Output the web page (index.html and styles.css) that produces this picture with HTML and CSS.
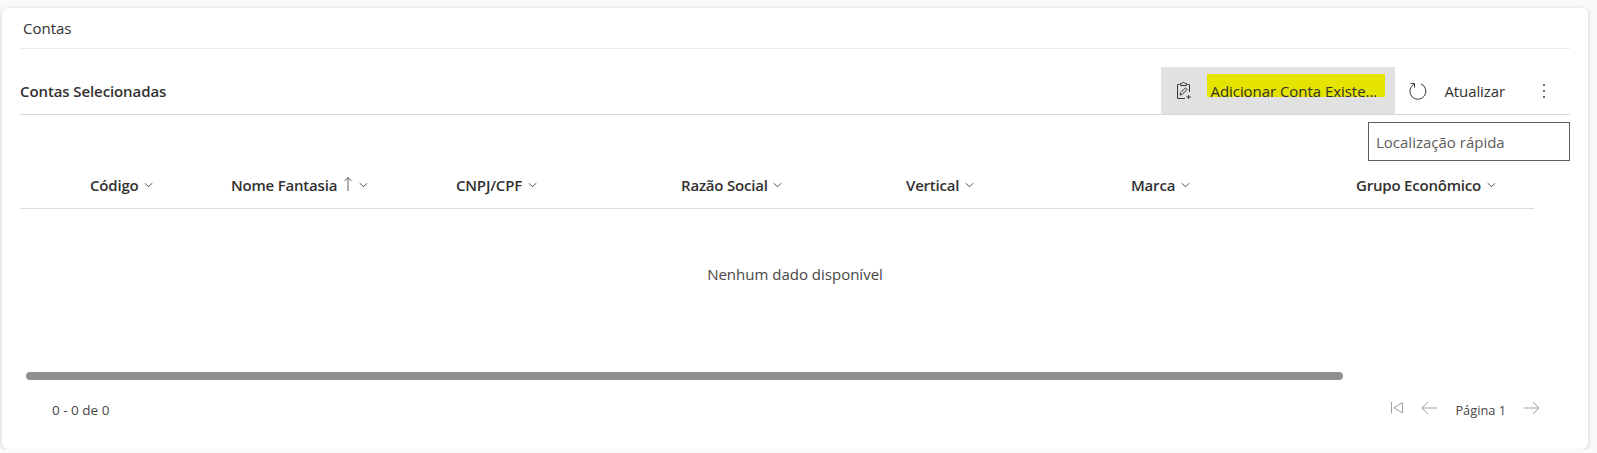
FILE: index.html
```html
<!DOCTYPE html>
<html lang="pt-BR">
<head>
    <meta charset="UTF-8">
    <title>Contas</title>
    <link rel="stylesheet" href="styles.css">
</head>
<body>
    <div class="card">
        <div class="section-title">Contas</div>

        <div class="command-bar">
            <div class="grid-title">Contas Selecionadas</div>
            <div class="commands">
                <button class="command command-active">
                    <svg class="icon-clip" width="18" height="20" viewBox="0 0 18 20" fill="none" stroke="#3b3a39" stroke-width="1">
                        <path d="M4.500 3.500H2.500V17.500H10M12.500 3.500H14.500V11"/>
                        <path d="M5.500 4.500V2.500H7C7.300 1 9.700 1 10 2.500H11.500V4.500Z"/>
                        <path d="M5 14L5.500 11.800L10.500 6.800L12.200 8.500L7.200 13.500Z"/>
                        <path d="M13.500 14V18M11.500 16H16"/>
                    </svg>
                    <span class="highlight">Adicionar Conta Existe...</span>
                </button>
                <button class="command command-refresh">
                    <svg width="20" height="20" viewBox="0 0 20 20" fill="none" stroke="#3b3a39" stroke-width="1">
                        <path d="M6.200 3.200A8 8 0 1 0 13 2.900"/>
                        <path d="M2.500 2.500H6.500V6.500"/>
                    </svg>
                    <span>Atualizar</span>
                </button>
                <button class="command-more" aria-label="Mais">
                    <i></i><i></i><i></i>
                </button>
            </div>
        </div>

        <div class="search-row">
            <input class="search" type="text" placeholder="Localização rápida">
        </div>

        <div class="grid-head">
            <div class="col">Código <svg class="chev" viewBox="0 0 10 6"><path d="M1 1L5 5L9 1"/></svg></div>
            <div class="col">Nome Fantasia
                <svg class="sort" width="10" height="16" viewBox="0 0 10 16" fill="none" stroke="#605e5c"><path d="M5 15V1.500M1.500 5L5 1.500L8.500 5"/></svg>
                <svg class="chev" viewBox="0 0 10 6"><path d="M1 1L5 5L9 1"/></svg></div>
            <div class="col">CNPJ/CPF <svg class="chev" viewBox="0 0 10 6"><path d="M1 1L5 5L9 1"/></svg></div>
            <div class="col">Razão Social <svg class="chev" viewBox="0 0 10 6"><path d="M1 1L5 5L9 1"/></svg></div>
            <div class="col">Vertical <svg class="chev" viewBox="0 0 10 6"><path d="M1 1L5 5L9 1"/></svg></div>
            <div class="col">Marca <svg class="chev" viewBox="0 0 10 6"><path d="M1 1L5 5L9 1"/></svg></div>
            <div class="col">Grupo Econômico <svg class="chev" viewBox="0 0 10 6"><path d="M1 1L5 5L9 1"/></svg></div>
        </div>

        <div class="empty">Nenhum dado disponível</div>

        <div class="scroll-track"><div class="scroll-thumb"></div></div>

        <div class="grid-foot">
            <div class="count">0 - 0 de 0</div>
            <div class="pager">
                <svg class="first" width="14" height="14" viewBox="0 0 14 14" fill="none" stroke="#a19f9d"><path d="M1.500 1V12.500M12.500 1.500V12L4 6.800Z"/></svg>
                <svg width="16" height="14" viewBox="0 0 16 14" fill="none" stroke="#a19f9d"><path d="M16 7H1M7 1L1 7L7 13"/></svg>
                <span class="page">Página 1</span>
                <svg width="16" height="14" viewBox="0 0 16 14" fill="none" stroke="#a19f9d"><path d="M0 7H15M9 1L15 7L9 13"/></svg>
            </div>
        </div>
    </div>
</body>
</html>
```

FILE: styles.css
```css
body {
    margin: 0;
    background-color: #faf9f8;
    font-family: "Open Sans", "Noto Sans", Arial, sans-serif;
    font-size: 15px;
    color: #323130;
}
button {
    font: inherit;
    color: inherit;
    background: none;
    border: none;
    padding: 0;
}
.card {
    box-sizing: border-box;
    width: 1586px;
    height: 441px;
    margin: 8px 0 0 2px;
    padding: 0 18px;
    background-color: #fff;
    border-radius: 6px;
    box-shadow: 0 1px 4px rgba(0, 0, 0, 0.18);
}
.section-title {
    height: 40px;
    line-height: 41px;
    padding-left: 3px;
    border-bottom: 1px solid #edebe9;
}
.command-bar {
    display: flex;
    justify-content: space-between;
    height: 47px;
    margin-top: 18px;
    border-bottom: 1px solid #d8d8d8;
}
.grid-title {
    line-height: 49px;
    font-weight: 600;
    letter-spacing: -0.1px;
}
.commands {
    display: flex;
    height: 47px;
}
.command {
    display: flex;
    align-items: center;
    height: 47px;
}
.command-active {
    width: 234px;
    padding-left: 14px;
    box-sizing: border-box;
    background-color: #e1e1e1;
}
.icon-clip {
    flex: none;
    margin-top: 1px;
}
.highlight {
    box-sizing: border-box;
    width: 178px;
    height: 23px;
    margin: -10px 0 0 14px;
    padding: 7px 0 0 3px;
    background-color: #e4e400;
    line-height: 20px;
    text-align: left;
    letter-spacing: -0.05px;
    white-space: nowrap;
}
.command-refresh {
    margin-left: 13px;
    gap: 16px;
    letter-spacing: -0.1px;
}
.command-more {
    display: flex;
    flex-direction: column;
    align-items: center;
    justify-content: center;
    gap: 4px;
    width: 26px;
    margin-left: 26px;
    margin-right: 13px;
}
.command-more i {
    width: 2px;
    height: 2px;
    border-radius: 50%;
    background-color: #323130;
}
.search-row {
    display: flex;
    justify-content: flex-end;
    margin-top: 7px;
}
.search {
    box-sizing: border-box;
    width: 202px;
    height: 39px;
    padding: 0 7px;
    border: 1px solid #605e5c;
    border-radius: 0;
    outline: none;
    font: inherit;
}
.search::placeholder {
    color: #605e5c;
    opacity: 1;
}
.grid-head {
    display: grid;
    grid-template-columns: 141px repeat(5, 225px) 1fr;
    width: 1444px;
    height: 47px;
    padding-left: 70px;
    border-bottom: 1px solid #dcdcdc;
    line-height: 49px;
    font-weight: 600;
    letter-spacing: -0.2px;
    white-space: nowrap;
}
.chev {
    width: 9px;
    height: 6px;
    margin: 0 0 3px 2px;
    fill: none;
    stroke: #3b3a39;
}
.sort {
    margin: 0 0 -1px 2px;
}
.empty {
    height: 100px;
    margin-right: 36px;
    padding-left: 36px;
    text-align: center;
    line-height: 130px;
    box-sizing: border-box;
    color: #484644;
}
.scroll-track {
    margin: 63px 0 0 6px;
    height: 8px;
}
.scroll-thumb {
    width: 1317px;
    height: 8px;
    border-radius: 4px;
    background-color: #8f8f8f;
}
.grid-foot {
    display: flex;
    justify-content: space-between;
    align-items: center;
    margin-top: 18px;
    height: 24px;
    font-size: 12.8px;
    color: #484644;
}
.count {
    padding-left: 32px;
    font-size: 13.5px;
}
.pager {
    display: flex;
    align-items: center;
    margin-right: 30px;
    gap: 18px;
}
.pager svg {
    margin-bottom: 5px;
}
.pager .first {
    margin-right: -1px;
}
```
